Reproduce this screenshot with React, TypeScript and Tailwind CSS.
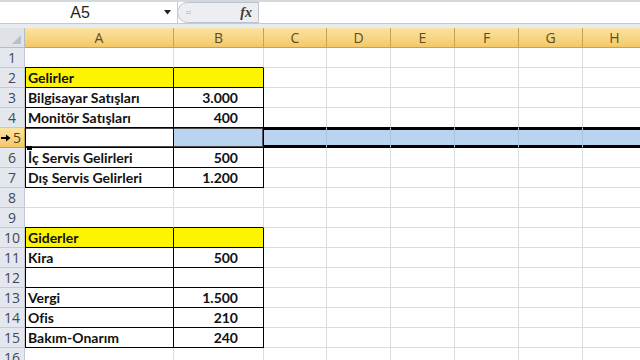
type Row = { n: number; a?: string; b?: string; yellow?: boolean; table?: boolean; topEdge?: boolean };

const rows: Row[] = [
  { n: 1, topEdge: true },
  { n: 2, a: "Gelirler", yellow: true, table: true },
  { n: 3, a: "Bilgisayar Satışları", b: "3.000", table: true },
  { n: 4, a: "Monitör Satışları", b: "400", table: true },
  { n: 5, table: true },
  { n: 6, a: "İç Servis Gelirleri", b: "500", table: true },
  { n: 7, a: "Dış Servis Gelirleri", b: "1.200", table: true },
  { n: 8 },
  { n: 9, topEdge: true },
  { n: 10, a: "Giderler", yellow: true, table: true },
  { n: 11, a: "Kira", b: "500", table: true },
  { n: 12, table: true },
  { n: 13, a: "Vergi", b: "1.500", table: true },
  { n: 14, a: "Ofis", b: "210", table: true },
  { n: 15, a: "Bakım-Onarım", b: "240", table: true },
  { n: 16 },
];

const extra = ["C", "D", "E", "F", "G", "H"];

function FormulaBar() {
  return (
    <div className="h-[28px] flex flex-col bg-[#e4e8ed]">
      <div className="h-[2px] bg-[#d3d8df]" />
      <div className="h-[21px] flex bg-white">
        <div className="w-[178px] flex items-center border-r border-[#c8ced6]">
          <div className="w-[160px] text-center text-[16px] text-[#1e1e1e] font-['Liberation_Sans',sans-serif]">A5</div>
          <svg width="8" height="5" viewBox="0 0 8 5" className="ml-[4px]">
            <path d="M0 0 H7 L3.5 4.5 Z" fill="#222" />
          </svg>
        </div>
        <div className="w-[82px] flex items-center justify-between bg-[#eceef1] border border-[#bcc3cc] rounded-l-[12px] -ml-[1px] pl-[8px] pr-[6px]">
          <span className="w-[5px] h-[3px] border-t border-b border-[#c3c8cf]" />
          <span className="text-[14px] italic font-bold text-[#3a3a3a] font-['Liberation_Serif',serif]">fx</span>
        </div>
        <div className="flex-1 bg-white" />
      </div>
      <div className="flex-1 border-t border-[#c3cad3] bg-[#e8ebef]" />
    </div>
  );
}

function Arrow() {
  return (
    <svg width="10" height="8" viewBox="0 0 10 8">
      <path d="M0 3 H5 V0.5 L9.5 4 L5 7.5 V5 H0 Z" fill="#000" />
    </svg>
  );
}

export default function App() {
  const headerBg = "bg-linear-to-b from-[#fbe3a2] to-[#f3c966]";
  return (
    <div className="w-[640px] h-[360px] overflow-hidden bg-white font-['Lato',sans-serif] [font-variant-ligatures:none] relative">
      <FormulaBar />
      <div className="grid grid-cols-[25px_149px_90px_63px_64px_64px_64px_64px_64px] auto-rows-[20px]">
        {/* corner */}
        <div className="bg-[#dfe3e8] border-r border-b border-[#b3bcc7] flex items-end justify-end p-[3px]">
          <svg width="9" height="9" viewBox="0 0 9 9">
            <path d="M9 0 V9 H0 Z" fill="#b7bfc9" />
          </svg>
        </div>
        {["A", "B", ...extra].map((c) => (
          <div
            key={c}
            className={`${headerBg} border-r border-b border-[#c9a24f] flex items-center justify-center text-[14px] text-[#5e4c22] font-['Open_Sans',sans-serif]`}
          >
            {c}
          </div>
        ))}

        {rows.map((r) => {
          const sel = r.n === 5;
          const nextTable = r.topEdge;
          const aBorder = r.table || nextTable ? "border-b-black" : "border-b-[#dadcdd]";
          const aRight = r.table ? "border-r-black" : "border-r-[#dadcdd]";
          const fill = r.yellow ? "bg-[#fdf500]" : "bg-white";
          const leftLine = r.table ? "shadow-[inset_1px_0_0_#000]" : "";
          return [
            <div
              key={`h${r.n}`}
              className={`border-r border-b flex items-center justify-center text-[14px] font-['Open_Sans',sans-serif] ${
                sel
                  ? `${headerBg} border-[#c9a24f] text-[#4a3c15] justify-start pl-[1px]`
                  : "bg-[#e4e8ee] border-[#c3cad4] text-[#3d4859]"
              }`}
            >
              {sel ? (
                <span className="flex items-center gap-[2px]">
                  <Arrow />
                  <span>5</span>
                </span>
              ) : (
                r.n
              )}
            </div>,
            <div
              key={`a${r.n}`}
              className={`border-r border-b ${aBorder} ${aRight} ${fill} ${
                sel ? "shadow-[inset_1px_0_0_#000,inset_0_1px_0_#4a4a4a,inset_0_-1px_0_#4a4a4a]" : leftLine
              } flex items-center pl-[3px] text-[14px] font-bold text-[#111] whitespace-nowrap`}
            >
              {r.a}
            </div>,
            <div
              key={`b${r.n}`}
              className={`border-r border-b ${aBorder} ${aRight} ${
                sel ? "bg-[#b9d3f1] shadow-[inset_0_1px_0_#4a4a4a,inset_0_-1px_0_#4a4a4a,inset_-1px_0_0_#555]" : fill
              } flex items-center justify-end pr-[25px] text-[14px] font-bold text-[#111]`}
            >
              {r.b}
            </div>,
            ...extra.map((c) => (
              <div
                key={`${c}${r.n}`}
                className={`border-r border-b ${
                  sel
                    ? "bg-[#b9d3f1] border-r-[#a8c3e3] border-b-black shadow-[inset_0_2px_0_#000,inset_0_-2px_0_#000]"
                    : r.n === 4
                    ? "bg-white border-r-[#dadcdd] border-b-black"
                    : "bg-white border-[#dadcdd]"
                }`}
              />
            )),
          ];
        })}
      </div>
      {/* drag cursor handle */}
      <div className="absolute left-[27px] top-[146px] w-[5px] h-[4px] bg-black" />
    </div>
  );
}
